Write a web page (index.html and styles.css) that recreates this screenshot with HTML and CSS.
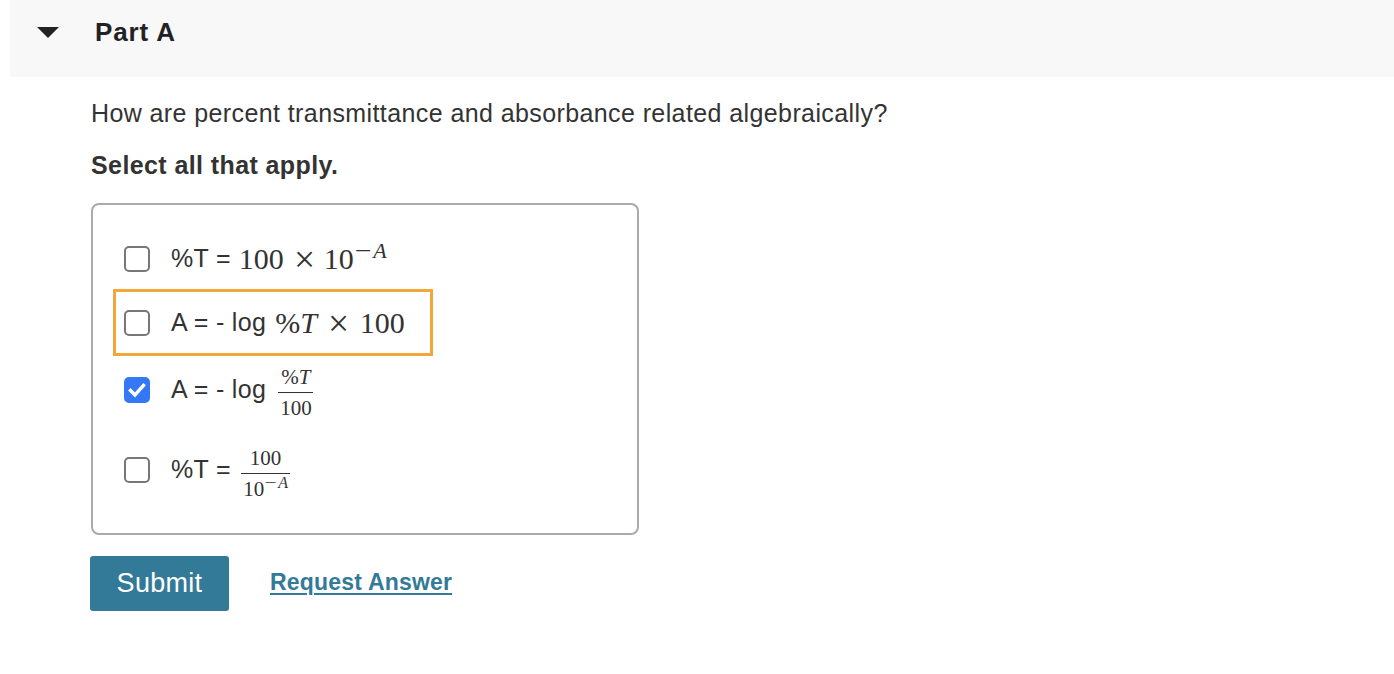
FILE: index.html
```html
<!DOCTYPE html>
<html>
<head>
<meta charset="utf-8">
<link rel="stylesheet" href="styles.css">
</head>
<body>
<div class="part-header">
  <span class="caret"></span>
  <h2 class="part-title">Part A</h2>
</div>
<div class="part-body">
  <p class="question">How are percent transmittance and absorbance related algebraically?</p>
  <p class="instruction">Select all that apply.</p>
  <div class="choices">
    <div class="opt opt-1">
      <span class="cb"></span>
      <span class="label">%T =<span class="math">100<span class="times">×</span>10<sup class="sup"><span class="minus">−</span><i>A</i></sup></span></span>
    </div>
    <div class="opt opt-2 focused">
      <span class="cb"></span>
      <span class="label">A = - log<span class="math">%<i>T</i><span class="times">×</span>100</span></span>
    </div>
    <div class="opt opt-3">
      <span class="cb checked"><svg viewBox="0 0 26 26" width="26" height="26"><path d="M6.5 13.5 L11 18 L19.5 8.5" fill="none" stroke="#fff" stroke-width="3.4" stroke-linecap="square"/></svg></span>
      <span class="label">A = - log<span class="frac frac-a"><span class="num">%<i>T</i></span><span class="den">100</span></span></span>
    </div>
    <div class="opt opt-4">
      <span class="cb"></span>
      <span class="label">%T =<span class="frac frac-b"><span class="num">100</span><span class="den">10<sup class="sup-s"><span class="minus">−</span><i>A</i></sup></span></span></span>
    </div>
  </div>
  <div class="actions">
    <button class="submit">Submit</button>
    <a class="request" href="#">Request Answer</a>
  </div>
</div>
</body>
</html>
```

FILE: styles.css
```css
html, body {
  margin: 0;
  padding: 0;
  background: #fff;
}
body {
  font-family: "Liberation Sans", Arial, sans-serif;
  color: #333;
}
.part-header {
  margin-left: 10px;
  height: 77px;
  background: #f8f8f8;
  display: flex;
  align-items: center;
}
.caret {
  width: 0;
  height: 0;
  border-left: 11px solid transparent;
  border-right: 11px solid transparent;
  border-top: 11px solid #222;
  margin-left: 27px;
  margin-top: -13px;
}
.part-title {
  margin: -13px 0 0 36px;
  font-size: 26px;
  letter-spacing: 0.9px;
  font-weight: bold;
  color: #222;
}
.part-body {
  padding-left: 91px;
}
.question {
  margin: 22px 0 0;
  font-size: 25px;
  letter-spacing: 0.4px;
  line-height: 28px;
}
.instruction {
  margin: 24px 0 0;
  font-size: 25px;
  letter-spacing: 0.4px;
  font-weight: bold;
  line-height: 28px;
}
.choices {
  margin-top: 24px;
  width: 548px;
  box-sizing: border-box;
  border: 2px solid #aaa;
  border-radius: 8px;
  padding: 23px 20px 20px 20px;
  display: flex;
  flex-direction: column;
  gap: 3px;
}
.opt {
  display: flex;
  align-items: center;
  width: 314px;
  box-sizing: border-box;
  padding: 0 8px;
  margin-left: 3px;
  font-size: 25px;
  letter-spacing: 0.3px;
}
.opt-1, .opt-2 { height: 61px; }
.opt-3 { height: 67px; }
.opt-4 { height: 87px; }
.focused {
  outline: 3px solid #f2a73a;
}
.cb {
  width: 26px;
  height: 26px;
  box-sizing: border-box;
  border: 2px solid #777;
  border-radius: 5px;
  flex: none;
  margin-right: 21px;
  display: block;
}
.cb.checked {
  background: #3478f6;
  border-color: #3478f6;
  position: relative;
}
.cb.checked svg {
  position: absolute;
  left: -2px;
  top: -2px;
}
.label {
  display: flex;
  align-items: center;
  white-space: pre;
}
.math {
  font-family: "Liberation Serif", "Times New Roman", serif;
  font-size: 30px;
  letter-spacing: 0;
  margin-left: 8px;
}
.opt-2 .math { margin-left: 9px; }
.times {
  display: inline-block;
  transform: scale(1.25);
  margin: 0 13px;
}
.opt-1 .times { margin: 0 11px 0 12px; }
.sup {
  font-size: 22px;
  vertical-align: 11px;
  line-height: 0;
}
.minus {
  display: inline-block;
  transform: scaleX(1.35);
  margin: 0 4px 0 3px;
}
.frac {
  display: inline-flex;
  flex-direction: column;
  align-items: center;
  font-family: "Liberation Serif", "Times New Roman", serif;
  font-size: 21px;
  letter-spacing: 0;
  margin-left: 12px;
}
.frac .num {
  line-height: 23px;
  padding: 0 2px 2px;
  border-bottom: 1.5px solid #333;
}
.frac .den {
  line-height: 23px;
  padding: 4px 2px 0;
}
.frac-a { margin-top: 6px; }
.frac-a .num { padding: 0 3px 3px; }
.frac-b { margin-left: 10px; margin-top: 8px; }
.frac-b .num { padding: 0 9px 3px; }
.frac-b .den { padding-top: 4px; }
.sup-s {
  font-size: 16px;
  vertical-align: 8px;
  line-height: 0;
}
.sup-s .minus {
  margin: 0 3px 0 2px;
}
.actions {
  margin-top: 21px;
  display: flex;
  align-items: center;
}
.submit {
  width: 139px;
  height: 55px;
  margin-left: -1px;
  background: #337a99;
  color: #fff;
  border: none;
  border-radius: 3px;
  font-family: "Liberation Sans", Arial, sans-serif;
  font-size: 27px;
  letter-spacing: 0.3px;
  padding: 0;
}
.request {
  margin-left: 41px;
  margin-top: -3px;
  color: #337a99;
  font-weight: bold;
  font-size: 23px;
  letter-spacing: 0.2px;
  text-decoration: underline;
  text-decoration-thickness: 2px;
  text-underline-offset: 3px;
}
```
